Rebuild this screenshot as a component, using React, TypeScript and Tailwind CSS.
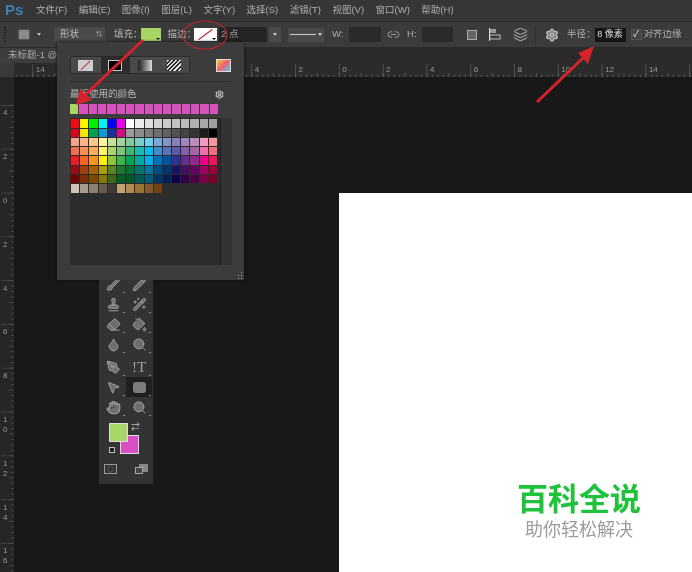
import React from "react";
import { Eraser, Stamp, PaintBucket, Droplet, Search, PenTool, MousePointer2, Hand, Settings, Link2, Layers, Brush, Pencil, Wand2 } from "lucide-react";

const menus = ["文件(F)", "编辑(E)", "图像(I)", "图层(L)", "文字(Y)", "选择(S)", "滤镜(T)", "视图(V)", "窗口(W)", "帮助(H)"];

const rows: string[][] = [
  ["#f50a10", "#fff200", "#00f000", "#00f5f5", "#0000f0", "#f000f0", "#ffffff", "#ebebeb", "#e0e0e0", "#d3d3d3", "#cbcbcb", "#c2c2c2", "#bbbbbb", "#b0b0b0", "#a8a8a8", "#a0a0a0"],
  ["#d8041c", "#fbe500", "#00a050", "#0c9cdc", "#1a2f98", "#d80a80", "#9a9a9a", "#8c8c8c", "#7d7d7d", "#6e6e6e", "#606060", "#525252", "#444444", "#333333", "#1c1c1c", "#000000"],
  ["#f7a08a", "#f9b48a", "#fcc88a", "#fff799", "#c4df9b", "#a3d39c", "#82ca9c", "#7bcdc8", "#6dcff6", "#7da7d9", "#8393ca", "#8781bd", "#a186be", "#bd8cbf", "#f49ac1", "#f5989d"],
  ["#f26c4f", "#f68e55", "#fbaf5c", "#fff568", "#acd372", "#7cc576", "#3bb878", "#1abbb4", "#00bff3", "#438cca", "#5574b9", "#5c5aa8", "#855fa8", "#a763a8", "#ee6ea8", "#f26d7d"],
  ["#ed1c24", "#f26522", "#f7941d", "#fff100", "#8dc63f", "#39b54a", "#00a651", "#00a99d", "#00aeef", "#0072bc", "#0054a6", "#2e3192", "#662d91", "#92278f", "#ec008b", "#ed145b"],
  ["#9e0b0f", "#a0410d", "#a36209", "#aba000", "#598527", "#1a7b30", "#007236", "#00746b", "#0076a3", "#004b80", "#003471", "#1b1464", "#440e62", "#630460", "#9e005d", "#9e0039"],
  ["#790000", "#7b2e00", "#7d4900", "#827b00", "#406618", "#005e20", "#005826", "#005952", "#005b7f", "#003663", "#002157", "#0d004c", "#32004b", "#4b0049", "#7b0046", "#7a0026"],
  ["#cbc4b4", "#a89c8c", "#8c8070", "#685c50", "#3e3a35", "#c4a26e", "#b08a50", "#9a7435", "#85582a", "#6f4412"],
];

const step = 43.8;

function TopRuler() {
  const labels: [number, string][] = [-7, -6, -5, -4, -3, -2, -1, 0, 1, 2, 3, 4, 5, 6, 7].map((i) => [339.3 + i * step, String(Math.abs(i) * 2)]);
  const minors = Array.from({ length: 130 }, (_, i) => 339.3 - 43.8 * 8 + i * 5.475);
  return (
    <svg width="692" height="14" className="block shrink-0 bg-[#2b2b2b]">
      {minors.map((x, i) => (
        <line key={i} x1={x} x2={x} y1={i % 4 === 0 ? 10 : 11.5} y2={14} stroke="#6c6c6c" strokeWidth="0.7" />
      ))}
      {labels.map(([x, t]) => (
        <g key={x}>
          <line x1={x} x2={x} y1={1} y2={14} stroke="#5e5e5e" strokeWidth="0.7" />
          <text x={x + 3} y={9} fontSize="8" fill="#9a9a9a" fontFamily="Liberation Sans, sans-serif">{t}</text>
        </g>
      ))}
      <line x1={689.7} x2={689.7} y1={1} y2={14} stroke="#5e5e5e" strokeWidth="0.7" />
      <rect width="14" height="14" fill="#3a3a3a" />
    </svg>
  );
}

function LeftRuler() {
  const ticks = [-2, -1, 0, 1, 2, 3, 4, 5, 6, 7, 8].map((i) => [116 + i * step, Math.abs(i) * 2] as [number, number]);
  const minors = Array.from({ length: 100 }, (_, i) => 116 - 2 * step + i * 5.475);
  return (
    <svg width="14" height="495" className="block shrink-0 bg-[#262626]">
      {minors.map((y, i) => (
        <line key={i} y1={y} y2={y} x1={i % 4 === 0 ? 9 : 11} x2={14} stroke="#555555" strokeWidth="0.7" />
      ))}
      {ticks.map(([y, v]) => (
        <g key={y}>
          <line y1={y} y2={y} x1={1} x2={14} stroke="#4c4c4c" strokeWidth="0.7" />
          {String(v).split("").map((c, j) => (
            <text key={j} x={3} y={y + 10 + j * 10} fontSize="8" fill="#999999" fontFamily="Liberation Sans, sans-serif">{c}</text>
          ))}
        </g>
      ))}
    </svg>
  );
}

function Slash({ className = "" }: { className?: string }) {
  return (
    <svg viewBox="0 0 20 14" preserveAspectRatio="none" className={className}>
      <line x1="4" y1="12.5" x2="16" y2="1.5" stroke="#c8303c" strokeWidth="1.4" />
    </svg>
  );
}

function Caret() {
  return <span className="absolute right-[1px] bottom-[1px] h-0 w-0 border-x-[2px] border-t-[2px] border-x-transparent border-t-[#111]" />;
}

function ToolDot() {
  return <span className="absolute right-[1px] bottom-[1px] h-[1px] w-[2px] bg-[#888]" />;
}

function Tool({ children, active }: { children: React.ReactNode; active?: boolean }) {
  return (
    <div className={`relative flex h-[20px] w-[26px] items-center justify-center text-[#a0a0a0] ${active ? "bg-[#1f1f1f]" : ""}`}>
      {children}
      <ToolDot />
    </div>
  );
}

const ic = { size: 15, strokeWidth: 1.6, fill: "#6e6e6e" };

export default function App() {
  return (
    <div className="relative flex h-[572px] w-[692px] flex-col overflow-hidden bg-[#181818] font-['Liberation_Sans','Noto_Sans_CJK_SC',sans-serif] blur-[0.4px]">
      {/* menu bar */}
      <div className="flex h-[21px] shrink-0 items-center bg-[#363636] pl-[5px] text-[9.5px] text-[#aeaeae]">
        <span className="w-[31px] text-[15px] font-bold text-[#3f7fb0]">Ps</span>
        <div className="flex gap-[11.5px]">
          {menus.map((m) => (
            <span key={m}>{m}</span>
          ))}
        </div>
      </div>

      {/* options bar */}
      <div className="flex h-[26px] shrink-0 items-center border-t border-[#2c2c2c] bg-[#3b3b3b] text-[9.5px] text-[#b0b0b0]">
        <span className="ml-[4px] h-[16px] w-[2px] border-x border-dotted border-[#222]" />
        <span className="ml-[12px] h-[11px] w-[12px] rounded-[2px] border border-[#555] bg-[#8a8a8a]" />
        <span className="ml-[7px] h-0 w-0 border-x-[2.5px] border-t-[3px] border-x-transparent border-t-[#bbb]" />
        <div className="ml-[13px] flex h-[15px] w-[51px] items-center justify-between rounded-[1px] bg-[#4a4a4a] pr-[3px] pl-[6px] text-[#c0c0c0]">
          <span>形状</span>
          <span className="text-[6px] leading-[5px] text-[#bbb]">⇅</span>
        </div>
        <span className="ml-[9px]">填充：</span>
        <span className="relative ml-[-2px] h-[13px] w-[20px] bg-[#a7d566]"><Caret /></span>
        <span className="ml-[7px]">描边：</span>
        <span className="relative ml-[-2px] h-[13px] w-[23px] bg-white"><Slash className="h-full w-full" /><Caret /></span>
        <div className="ml-[2px] flex h-[15px] w-[48px] items-center rounded-[1px] bg-[#242424] pl-[2px] text-[#9a9a9a]">2 点</div>
        <div className="ml-[2px] flex h-[15px] w-[12px] items-center justify-center bg-[#4a4a4a]">
          <span className="h-0 w-0 border-x-[2.5px] border-t-[3px] border-x-transparent border-t-[#ccc]" />
        </div>
        <div className="ml-[7px] flex h-[14px] w-[36px] items-center gap-[2px] rounded-[1px] bg-[#4a4a4a] px-[2px]">
          <span className="h-[1px] w-[27px] bg-[#ccc]" />
          <span className="h-0 w-0 border-x-[2px] border-t-[3px] border-x-transparent border-t-[#ccc]" />
        </div>
        <span className="ml-[8px] w-[17px]">W:</span>
        <span className="h-[15px] w-[32px] rounded-[1px] bg-[#2a2a2a]" />
        <Link2 size={13} strokeWidth={1.6} className="mx-[6px] text-[#aaa]" />
        <span className="ml-[1px] w-[15px]">H:</span>
        <span className="h-[15px] w-[31px] rounded-[1px] bg-[#2a2a2a]" />
        <span className="ml-[14px] h-[10px] w-[10px] border border-[#aaa] bg-[#666]" />
        <svg width="13" height="13" viewBox="0 0 13 13" className="ml-[12px]">
          <rect x="1" y="1" width="6" height="4" fill="#999" />
          <rect x="1" y="7" width="10" height="4" fill="none" stroke="#bbb" />
          <line x1="0.5" y1="0" x2="0.5" y2="13" stroke="#ddd" />
        </svg>
        <Layers size={15} strokeWidth={1.6} className="ml-[11px] text-[#b5b5b5]" />
        <span className="ml-[7px] h-[20px] w-px bg-[#2d2d2d]" />
        <Settings size={14} strokeWidth={2.4} fill="#777" className="ml-[9px] text-[#bdbdbd]" />
        <span className="ml-[8px]">半径：</span>
        <div className="ml-[-1px] flex h-[14px] w-[31px] items-center justify-center bg-[#151515] text-[9px] text-[#ddd]">8 像素</div>
        <span className="ml-[5px] flex h-[11px] w-[11px] items-center justify-center border border-[#555] bg-[#444] text-[9px] leading-none text-[#ddd]">✓</span>
        <span className="ml-[2px]">对齐边缘</span>
      </div>

      {/* tabs */}
      <div className="flex h-[16px] shrink-0 items-end bg-[#2a2a2a]">
        <div className="flex h-[15px] w-[57px] items-center bg-[#3d3d3d] pl-[8px] text-[9.5px] whitespace-nowrap text-[#a8a8a8]">未标题-1 @</div>
      </div>

      <TopRuler />

      <div className="flex min-h-0 flex-1">
        <LeftRuler />
        <div className="flex-1">
          <div className="mt-[116px] ml-[325px] h-[400px] bg-white" />
        </div>
      </div>

      {/* swatches popup */}
      <div className="absolute top-[42px] left-[57px] flex h-[238px] w-[187px] flex-col bg-[#3c3c3c] px-[13px] pt-[14px] shadow-[0_0_3px_#111]">
        <div className="flex items-center border-b border-[#2e2e2e] pb-[7px]">
          <div className="flex h-[18px] overflow-hidden rounded-[2px] border border-[#2a2a2a]">
            <div className="flex w-[30px] items-center justify-center bg-[#4a4a4a]">
              <div className="h-[11px] w-[15px] bg-[#cfcfcf]"><Slash className="block h-full w-full" /></div>
            </div>
            <div className="flex w-[30px] items-center justify-center bg-[#2c2c2c]">
              <div className="h-[11px] w-[14px] border border-[#ccc] bg-black" />
            </div>
            <div className="flex w-[30px] items-center justify-center bg-[#4a4a4a]">
              <div className="h-[11px] w-[14px] bg-gradient-to-r from-[#222] to-[#ddd]" />
            </div>
            <div className="flex w-[30px] items-center justify-center bg-[#4a4a4a]">
              <div className="h-[11px] w-[14px] bg-[repeating-linear-gradient(135deg,#ddd_0,#ddd_1.5px,#222_1.5px,#222_3px)]" />
            </div>
          </div>
          <div className="ml-[26px] h-[13px] w-[15px] border border-[#ddd] bg-[linear-gradient(135deg,#f0d040,#f06070_50%,#50d0f0)]" />
        </div>
        <div className="mt-[5px] flex items-center justify-between pr-[7px] text-[9.5px] text-[#b5b5b5]">
          <span>最近使用的颜色</span>
          <Settings size={9} strokeWidth={3} className="text-[#bbb]" />
        </div>
        <div className="mt-[3px] flex h-[10px] w-[148px]">
          <span className="flex-1 bg-[#a7d566]" />
          {Array.from({ length: 15 }, (_, i) => (
            <span key={i} className="ml-px flex-1 bg-[#d552bd]" />
          ))}
        </div>
        <div className="mt-[4px] flex h-[147px] w-[162px] bg-[#2c2c2c]">
          <div className="flex w-[150px] flex-col gap-[1px] pt-px pl-px">
            {rows.map((r, i) => (
              <div key={i} className="flex h-[8.3px] gap-[1px]">
                {r.map((c, j) => (
                  <span key={j} className="w-[8.2px]" style={{ background: c }} />
                ))}
              </div>
            ))}
          </div>
          <div className="flex-1 border-l border-[#1f1f1f] bg-[#333]" />
        </div>
        <svg width="7" height="7" viewBox="0 0 7 7" className="absolute right-[1px] bottom-[1px]">
          <path d="M6 0v1H5V0zM6 3v1H5V3zM3 3v1H2V3zM6 6v1H5V6zM3 6v1H2V6zM0 6v1H-1V6z" fill="#aaa" />
        </svg>
      </div>

      {/* toolbox */}
      <div className="absolute top-[280px] left-[99px] flex h-[204px] w-[54px] flex-col items-center overflow-hidden bg-[#333333]">
        <div className="mt-[-6px] grid grid-cols-2">
          <Tool><Brush {...ic} /></Tool>
          <Tool><Pencil {...ic} /></Tool>
          <Tool><Stamp {...ic} /></Tool>
          <Tool><Wand2 {...ic} /></Tool>
          <Tool><Eraser {...ic} /></Tool>
          <Tool><PaintBucket {...ic} /></Tool>
          <Tool><Droplet {...ic} /></Tool>
          <Tool><Search {...ic} /></Tool>
        </div>
        <div className="mt-[3px] grid grid-cols-2">
          <Tool><PenTool {...ic} /></Tool>
          <Tool><span className="font-['Liberation_Serif',serif] text-[15px] leading-none">!T</span></Tool>
          <Tool><MousePointer2 {...ic} /></Tool>
          <Tool active><span className="h-[11px] w-[13px] rounded-[3px] bg-[#7c7c7c]" /></Tool>
        </div>
        <div className="grid grid-cols-2">
          <Tool><Hand size={15} strokeWidth={1.8} fill="#6e6e6e" /></Tool>
          <Tool><Search {...ic} /></Tool>
        </div>
        <div className="relative mt-[6px] h-[34px] w-[40px] shrink-0">
          <span className="absolute top-0 left-[3px] z-10 h-[19px] w-[19px] border border-[#ddd] bg-[#a7d566]" />
          <span className="absolute top-[12px] left-[14px] h-[19px] w-[19px] border border-[#ddd] bg-[#d94fc6]" />
          <span className="absolute top-0 left-[25px] text-[9px] leading-none text-[#bbb]">⇄</span>
          <span className="absolute top-[24px] left-[3px] h-[6px] w-[6px] border border-[#bbb] bg-[#222]" />
        </div>
        <div className="mt-[7px] flex w-[46px] justify-between px-[1px]">
          <span className="flex h-[10px] w-[13px] items-center justify-center border border-[#999] text-[6px] leading-none text-[#aaa]">◯</span>
          <span className="relative h-[10px] w-[13px]">
            <span className="absolute top-0 right-0 h-[8px] w-[9px] bg-[#888]" />
            <span className="absolute bottom-0 left-0 h-[7px] w-[8px] border border-[#aaa] bg-[#444]" />
          </span>
        </div>
      </div>

      {/* annotations */}
      <svg width="692" height="572" viewBox="0 0 692 572" className="pointer-events-none absolute inset-0">
        <ellipse cx="205" cy="35" rx="22" ry="14" fill="none" stroke="#b8252e" strokeWidth="1.2" />
        <line x1="143" y1="40" x2="84" y2="96" stroke="#d5232b" strokeWidth="3" />
        <polygon points="76,105 80,89 92,100" fill="#d5232b" />
        <line x1="537" y1="102" x2="584" y2="57" stroke="#d5232b" strokeWidth="3" />
        <polygon points="594,46 578,53 588,64" fill="#d5232b" />
      </svg>

      {/* watermark */}
      <div className="absolute top-[478px] left-[517px] flex w-[124px] flex-col items-center">
        <span className="font-['Noto_Sans_CJK_SC',sans-serif] text-[31px] leading-[38px] font-bold whitespace-nowrap text-[#1fc23a]">百科全说</span>
        <span className="font-['Noto_Sans_CJK_SC',sans-serif] text-[18px] leading-[24px] whitespace-nowrap text-[#9c9c9c]">助你轻松解决</span>
      </div>
    </div>
  );
}
